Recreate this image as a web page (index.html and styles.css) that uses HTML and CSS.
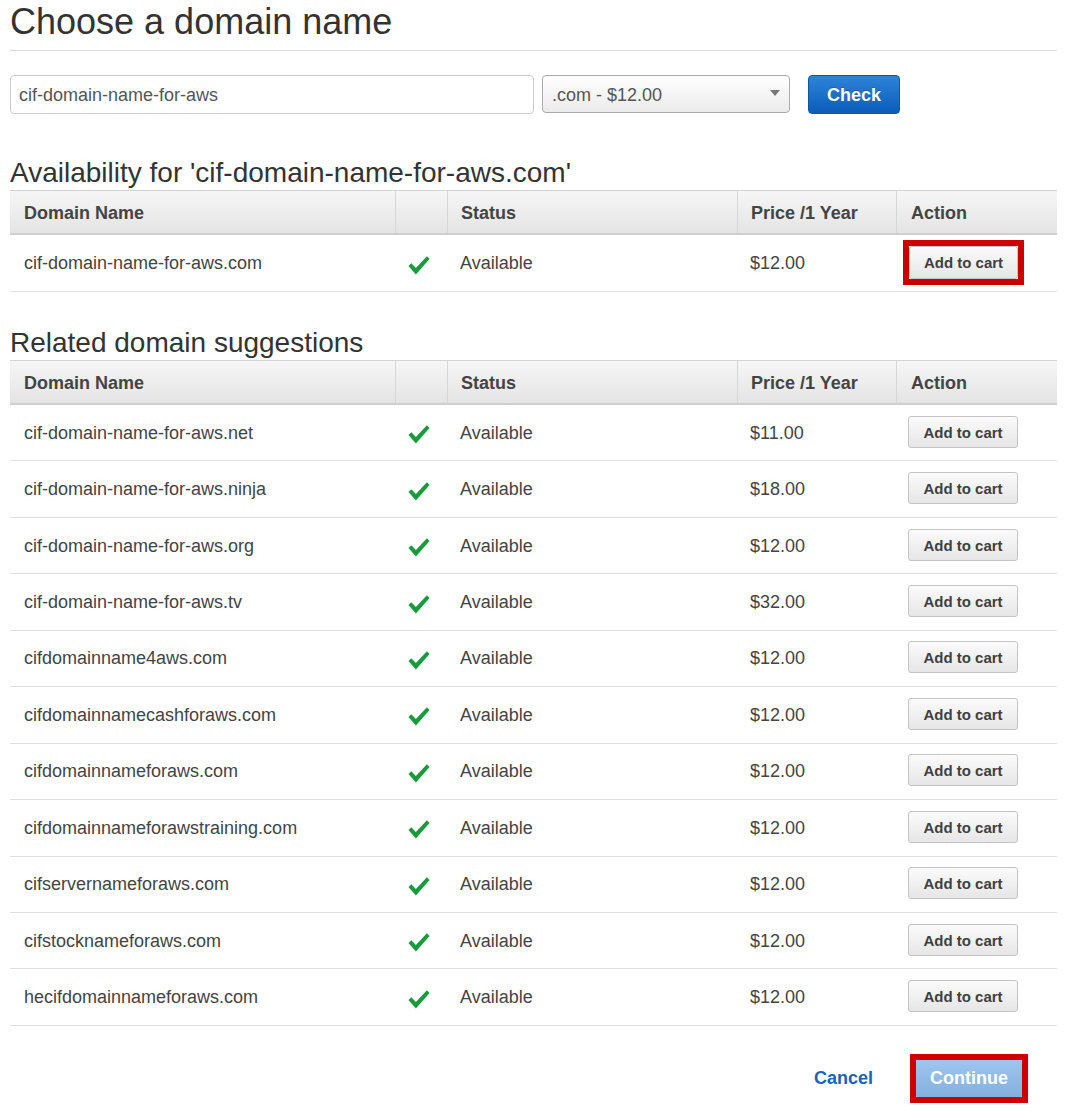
FILE: index.html
```html
<!DOCTYPE html>
<html lang="en">
<head>
<meta charset="utf-8">
<title>Choose a domain name</title>
<link rel="stylesheet" href="styles.css">
</head>
<body>
<div class="page">
  <h1 class="title">Choose a domain name</h1>

  <div class="search">
    <input class="search-input" type="text" value="cif-domain-name-for-aws">
    <div class="tld-select">
      <span>.com - $12.00</span>
      <span class="caret"></span>
    </div>
    <button class="btn-check">Check</button>
  </div>

  <h2 class="section-title">Availability for 'cif-domain-name-for-aws.com'</h2>
  <div class="dtable">
    <div class="drow dhead">
      <div class="cell">Domain Name</div>
      <div class="cell sep"></div>
      <div class="cell sep">Status</div>
      <div class="cell sep">Price /1 Year</div>
      <div class="cell sep">Action</div>
    </div>
    <div class="drow tall">
      <div class="cell">cif-domain-name-for-aws.com</div>
      <div class="cell icon"><svg class="tick" viewBox="0 0 24 22"><path d="M0.5 11.5 L3.6 8.6 L8.6 13.6 L20.6 1 L23.5 4 L8.6 20.8 Z"/></svg></div>
      <div class="cell">Available</div>
      <div class="cell">$12.00</div>
      <div class="cell btn-cell"><span class="highlight"><button class="btn-cart">Add to cart</button></span></div>
    </div>
  </div>

  <h2 class="section-title second">Related domain suggestions</h2>
  <div class="dtable" id="suggestions">
    <div class="drow dhead">
      <div class="cell">Domain Name</div>
      <div class="cell sep"></div>
      <div class="cell sep">Status</div>
      <div class="cell sep">Price /1 Year</div>
      <div class="cell sep">Action</div>
    </div>
    <div class="drow"><div class="cell">cif-domain-name-for-aws.net</div><div class="cell icon"><svg class="tick" viewBox="0 0 24 22"><path d="M0.5 11.5 L3.6 8.6 L8.6 13.6 L20.6 1 L23.5 4 L8.6 20.8 Z"/></svg></div><div class="cell">Available</div><div class="cell">$11.00</div><div class="cell btn-cell"><button class="btn-cart">Add to cart</button></div></div>
    <div class="drow"><div class="cell">cif-domain-name-for-aws.ninja</div><div class="cell icon"><svg class="tick" viewBox="0 0 24 22"><path d="M0.5 11.5 L3.6 8.6 L8.6 13.6 L20.6 1 L23.5 4 L8.6 20.8 Z"/></svg></div><div class="cell">Available</div><div class="cell">$18.00</div><div class="cell btn-cell"><button class="btn-cart">Add to cart</button></div></div>
    <div class="drow"><div class="cell">cif-domain-name-for-aws.org</div><div class="cell icon"><svg class="tick" viewBox="0 0 24 22"><path d="M0.5 11.5 L3.6 8.6 L8.6 13.6 L20.6 1 L23.5 4 L8.6 20.8 Z"/></svg></div><div class="cell">Available</div><div class="cell">$12.00</div><div class="cell btn-cell"><button class="btn-cart">Add to cart</button></div></div>
    <div class="drow"><div class="cell">cif-domain-name-for-aws.tv</div><div class="cell icon"><svg class="tick" viewBox="0 0 24 22"><path d="M0.5 11.5 L3.6 8.6 L8.6 13.6 L20.6 1 L23.5 4 L8.6 20.8 Z"/></svg></div><div class="cell">Available</div><div class="cell">$32.00</div><div class="cell btn-cell"><button class="btn-cart">Add to cart</button></div></div>
    <div class="drow"><div class="cell">cifdomainname4aws.com</div><div class="cell icon"><svg class="tick" viewBox="0 0 24 22"><path d="M0.5 11.5 L3.6 8.6 L8.6 13.6 L20.6 1 L23.5 4 L8.6 20.8 Z"/></svg></div><div class="cell">Available</div><div class="cell">$12.00</div><div class="cell btn-cell"><button class="btn-cart">Add to cart</button></div></div>
    <div class="drow"><div class="cell">cifdomainnamecashforaws.com</div><div class="cell icon"><svg class="tick" viewBox="0 0 24 22"><path d="M0.5 11.5 L3.6 8.6 L8.6 13.6 L20.6 1 L23.5 4 L8.6 20.8 Z"/></svg></div><div class="cell">Available</div><div class="cell">$12.00</div><div class="cell btn-cell"><button class="btn-cart">Add to cart</button></div></div>
    <div class="drow"><div class="cell">cifdomainnameforaws.com</div><div class="cell icon"><svg class="tick" viewBox="0 0 24 22"><path d="M0.5 11.5 L3.6 8.6 L8.6 13.6 L20.6 1 L23.5 4 L8.6 20.8 Z"/></svg></div><div class="cell">Available</div><div class="cell">$12.00</div><div class="cell btn-cell"><button class="btn-cart">Add to cart</button></div></div>
    <div class="drow"><div class="cell">cifdomainnameforawstraining.com</div><div class="cell icon"><svg class="tick" viewBox="0 0 24 22"><path d="M0.5 11.5 L3.6 8.6 L8.6 13.6 L20.6 1 L23.5 4 L8.6 20.8 Z"/></svg></div><div class="cell">Available</div><div class="cell">$12.00</div><div class="cell btn-cell"><button class="btn-cart">Add to cart</button></div></div>
    <div class="drow"><div class="cell">cifservernameforaws.com</div><div class="cell icon"><svg class="tick" viewBox="0 0 24 22"><path d="M0.5 11.5 L3.6 8.6 L8.6 13.6 L20.6 1 L23.5 4 L8.6 20.8 Z"/></svg></div><div class="cell">Available</div><div class="cell">$12.00</div><div class="cell btn-cell"><button class="btn-cart">Add to cart</button></div></div>
    <div class="drow"><div class="cell">cifstocknameforaws.com</div><div class="cell icon"><svg class="tick" viewBox="0 0 24 22"><path d="M0.5 11.5 L3.6 8.6 L8.6 13.6 L20.6 1 L23.5 4 L8.6 20.8 Z"/></svg></div><div class="cell">Available</div><div class="cell">$12.00</div><div class="cell btn-cell"><button class="btn-cart">Add to cart</button></div></div>
    <div class="drow"><div class="cell">hecifdomainnameforaws.com</div><div class="cell icon"><svg class="tick" viewBox="0 0 24 22"><path d="M0.5 11.5 L3.6 8.6 L8.6 13.6 L20.6 1 L23.5 4 L8.6 20.8 Z"/></svg></div><div class="cell">Available</div><div class="cell">$12.00</div><div class="cell btn-cell"><button class="btn-cart">Add to cart</button></div></div>
  </div>

  <div class="footer">
    <a class="cancel" href="#">Cancel</a>
    <span class="highlight"><button class="btn-continue">Continue</button></span>
  </div>
</div>
</body>
</html>
```

FILE: styles.css
```css
* { box-sizing: border-box; }

html, body {
  margin: 0;
  padding: 0;
  background: #ffffff;
}

body {
  font-family: "Liberation Sans", Arial, sans-serif;
  color: #444444;
}

.page {
  padding: 2px 10px 0 10px;
  width: 1067px;
}

.title {
  margin: 0;
  font-size: 36px;
  line-height: 40px;
  font-weight: normal;
  color: #333333;
  padding-bottom: 8px;
  border-bottom: 1px solid #d9d9d9;
}

.search {
  display: flex;
  align-items: flex-start;
  margin-top: 24px;
  height: 39px;
}

.search-input {
  width: 524px;
  height: 39px;
  border: 1px solid #cccccc;
  border-radius: 4px;
  padding: 2px 0 0 8px;
  font-family: "Liberation Sans", Arial, sans-serif;
  font-size: 18px;
  color: #555555;
  background: #ffffff;
  outline: none;
}

.tld-select {
  width: 248px;
  height: 38px;
  margin-left: 8px;
  border: 1px solid #aaaaaa;
  border-radius: 4px;
  background: linear-gradient(#ffffff, #ebebeb);
  display: flex;
  align-items: center;
  justify-content: space-between;
  padding: 2px 9px 0 9px;
  font-size: 18px;
  color: #555555;
}

.caret {
  width: 0;
  height: 0;
  border-left: 5px solid transparent;
  border-right: 5px solid transparent;
  border-top: 6px solid #777777;
  margin-bottom: 4px;
}

.btn-check {
  width: 92px;
  height: 39px;
  margin-left: 18px;
  border: 1px solid #0b57a8;
  border-radius: 4px;
  background: linear-gradient(#2d84d8, #0a5db9);
  color: #ffffff;
  font-family: "Liberation Sans", Arial, sans-serif;
  font-size: 18px;
  font-weight: bold;
  padding: 2px 0 0 0;
  text-shadow: 0 -1px 0 rgba(0, 0, 0, 0.2);
}

.section-title {
  margin: 42px 0 0 0;
  font-size: 28px;
  line-height: 34px;
  font-weight: normal;
  color: #333333;
}

.section-title.second {
  margin-top: 34px;
}

.dtable {
  width: 1047px;
}

.drow {
  display: grid;
  grid-template-columns: 385px 52px 290px 159px 161px;
  height: 56.45px;
  border-bottom: 1px solid #e0e0e0;
  font-size: 18px;
  color: #444444;
}

.drow .cell {
  padding-top: 1px;
}

.drow .cell.btn-cell {
  padding-top: 0;
  padding-bottom: 2px;
}

.drow.tall {
  height: 57px;
}

.dhead {
  height: 45px;
  border-top: 1px solid #d4d4d4;
  border-bottom: 2px solid #cfcfcf;
  background: linear-gradient(#f6f6f6, #e4e4e4);
  font-weight: bold;
  color: #444444;
}

.dhead .cell {
  padding-top: 2px;
}

.cell {
  display: flex;
  align-items: center;
  padding-left: 13px;
  white-space: nowrap;
}

.drow .cell:first-child {
  padding-left: 14px;
}

.dhead .cell:last-child {
  padding-left: 14px;
}

.sep {
  border-left: 1px solid #d6d6d6;
}

.tick {
  width: 22px;
  height: 21px;
  fill: #1a9b3b;
  margin-top: 3px;
}

.btn-cart {
  display: block;
  width: 110px;
  height: 32px;
  margin-left: -1px;
  border: 1px solid #c4c4c4;
  border-radius: 3px;
  background: linear-gradient(#fbfbfb, #e6e6e6);
  color: #3f3f3f;
  font-family: "Liberation Sans", Arial, sans-serif;
  font-size: 15px;
  font-weight: bold;
  padding: 1px 0 0 0;
}

.highlight {
  display: block;
  outline: 6px solid #cc0000;
  outline-offset: 0;
}

.highlight .btn-cart {
  margin-left: 0;
  width: 109px;
  height: 33px;
}

.footer {
  display: flex;
  justify-content: flex-end;
  align-items: center;
  margin-top: 34px;
  padding-right: 35px;
  padding-bottom: 14px;
}

.cancel {
  font-size: 18px;
  font-weight: bold;
  color: #1c62b8;
  text-decoration: none;
  margin-right: 43px;
}

.btn-continue {
  display: block;
  width: 106px;
  height: 37px;
  border: none;
  border-radius: 1px;
  background: linear-gradient(#9dc6ef, #84b0df);
  color: #ffffff;
  font-family: "Liberation Sans", Arial, sans-serif;
  font-size: 18px;
  font-weight: bold;
  padding: 1px 0 0 0;
}
```
